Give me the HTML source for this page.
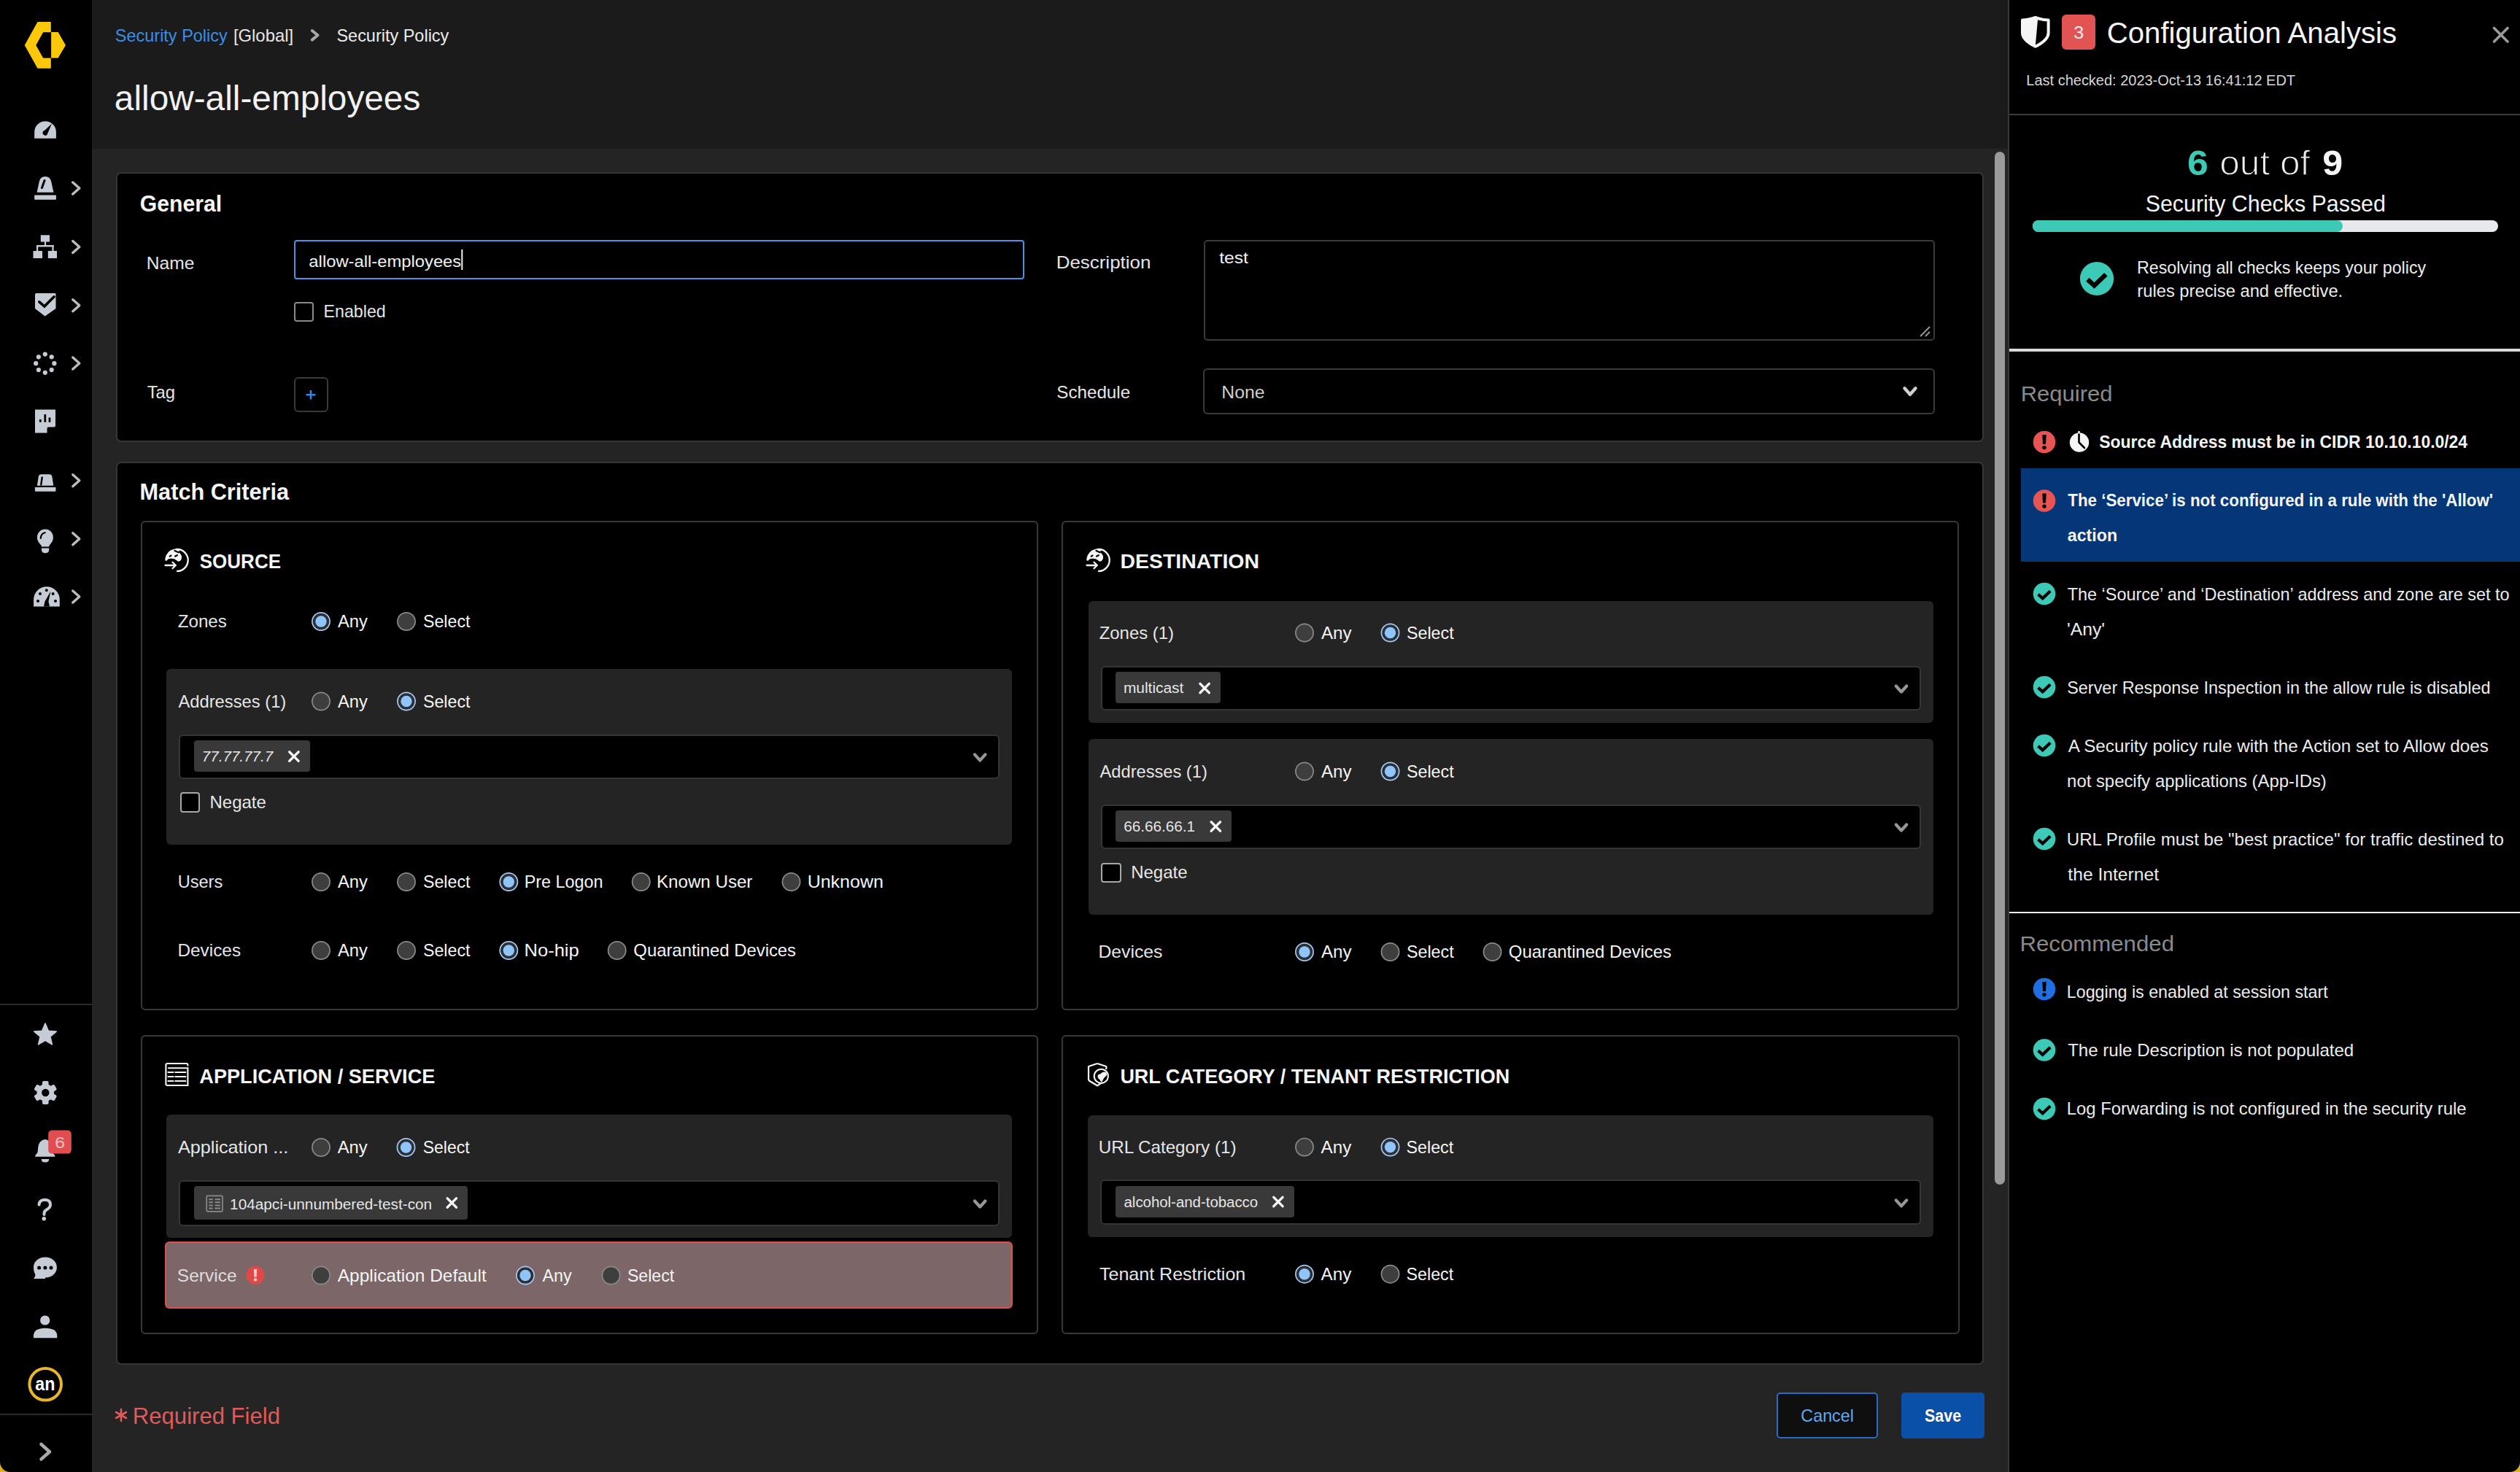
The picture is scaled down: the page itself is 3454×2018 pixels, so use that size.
<!DOCTYPE html>
<html><head><meta charset="utf-8"><style>
html,body{margin:0;padding:0;}
body{width:3454px;height:2018px;background:#242424;position:relative;overflow:hidden;font-family:"Liberation Sans",sans-serif;}
#bg>div{position:absolute;box-sizing:border-box;}
svg{position:absolute;left:0;top:0;}
text{font-family:"Liberation Sans",sans-serif;}
</style></head><body>
<div id="bg">
<div style="left:0px;top:0px;width:126px;height:2018px;background:#000;"></div>
<div style="left:0px;top:1376px;width:126px;height:2px;background:#2a2a2a;"></div>
<div style="left:0px;top:1938px;width:126px;height:2px;background:#2a2a2a;"></div>
<div style="left:126px;top:0px;width:2626px;height:204px;background:#1b1b1b;"></div>
<div style="left:2752px;top:0px;width:702px;height:2018px;background:#000;"></div>
<div style="left:2752px;top:0px;width:2px;height:2018px;background:#383838;"></div>
<div style="left:2734px;top:208px;width:14px;height:1416px;background:#9a9a9a;border-radius:7px;"></div>
<div style="left:158.5px;top:235.5px;width:2560.0px;height:370.0px;background:#000;border:2px solid #363636;border-radius:7px;"></div>
<div style="left:158.5px;top:632.5px;width:2560.0px;height:1238.0px;background:#000;border:2px solid #363636;border-radius:7px;"></div>
<div style="left:192.5px;top:714px;width:1230.0px;height:670.5px;background:#000;border:2px solid #383838;border-radius:6px;"></div>
<div style="left:1455px;top:714px;width:1230px;height:671px;background:#000;border:2px solid #383838;border-radius:6px;"></div>
<div style="left:192.5px;top:1419px;width:1230.0px;height:410px;background:#000;border:2px solid #383838;border-radius:6px;"></div>
<div style="left:1455px;top:1419px;width:1230.5px;height:410px;background:#000;border:2px solid #383838;border-radius:6px;"></div>
<div style="left:228px;top:917px;width:1158.5px;height:240.5px;background:#242424;border-radius:6px;"></div>
<div style="left:1491.5px;top:823.5px;width:1158.5px;height:167.5px;background:#242424;border-radius:6px;"></div>
<div style="left:1491.5px;top:1013px;width:1158.5px;height:240.5px;background:#242424;border-radius:6px;"></div>
<div style="left:228px;top:1528px;width:1158.5px;height:169px;background:#242424;border-radius:6px;"></div>
<div style="left:1491px;top:1528.5px;width:1158.5px;height:167.0px;background:#242424;border-radius:6px;"></div>
<div style="left:226px;top:1702px;width:1162px;height:92px;background:#7c6667;border:2px solid #e04f50;border-radius:6px;"></div>
<div style="left:245px;top:1006.5px;width:1124.5px;height:61.0px;background:#000;border:2px solid #353535;border-radius:6px;"></div>
<div style="left:1508.5px;top:912.5px;width:1124.0px;height:61.0px;background:#000;border:2px solid #353535;border-radius:6px;"></div>
<div style="left:1508.5px;top:1102.5px;width:1124.0px;height:61.0px;background:#000;border:2px solid #353535;border-radius:6px;"></div>
<div style="left:244.5px;top:1617.5px;width:1125.0px;height:63.0px;background:#000;border:2px solid #353535;border-radius:6px;"></div>
<div style="left:1507.5px;top:1617px;width:1125.5px;height:62px;background:#000;border:2px solid #353535;border-radius:6px;"></div>
<div style="left:266px;top:1015px;width:159px;height:42.5px;background:#393939;border-radius:4px;"></div>
<div style="left:1529px;top:921px;width:144px;height:42.5px;background:#393939;border-radius:4px;"></div>
<div style="left:1529px;top:1111px;width:159px;height:42.5px;background:#393939;border-radius:4px;"></div>
<div style="left:266px;top:1626px;width:375px;height:46px;background:#393939;border-radius:4px;"></div>
<div style="left:1529px;top:1626px;width:245px;height:43px;background:#393939;border-radius:4px;"></div>
<div style="left:402.5px;top:329px;width:1001.5px;height:54px;background:#000;border:2px solid #4a92e6;border-radius:4px;"></div>
<div style="left:1649.5px;top:328.5px;width:1002.0px;height:138.0px;background:#000;border:2px solid #3a3a3a;border-radius:5px;"></div>
<div style="left:1649px;top:505px;width:1002.5px;height:63px;background:#000;border:2px solid #3a3a3a;border-radius:6px;"></div>
<div style="left:402.5px;top:413.5px;width:27.0px;height:27.0px;background:#000;border:2px solid #8a8a8a;border-radius:4px;"></div>
<div style="left:402.5px;top:517px;width:47.5px;height:47.5px;background:#000;border:2px solid #3a3a3a;border-radius:6px;"></div>
<div style="left:246.5px;top:1086px;width:27.0px;height:27.5px;background:#000;border:2px solid #a8a8a8;border-radius:4px;"></div>
<div style="left:1509px;top:1182.5px;width:27.5px;height:27.5px;background:#000;border:2px solid #a8a8a8;border-radius:4px;"></div>
<div style="left:2435px;top:1908.5px;width:139px;height:63.0px;background:#0f0f10;border:2px solid #2a6ac5;border-radius:5px;"></div>
<div style="left:2606px;top:1908.5px;width:114px;height:63.0px;background:#0b50a8;border-radius:5px;"></div>
<div style="left:2754px;top:156px;width:700px;height:2px;background:#3a3a3a;"></div>
<div style="left:2786px;top:302px;width:637.5px;height:16px;background:#e8e9ec;border-radius:8px;"></div>
<div style="left:2786px;top:302px;width:424.5px;height:16px;background:#3cc9b6;border-radius:8px;"></div>
<div style="left:2754px;top:478px;width:700px;height:4px;background:#d9d9d9;"></div>
<div style="left:2770px;top:642px;width:684px;height:128px;background:#043678;"></div>
<div style="left:2754px;top:1250px;width:700px;height:2px;background:#eeeeee;"></div>
<div style="left:2826px;top:20px;width:46px;height:48px;background:#e25353;border-radius:6px;"></div>
</div>
<svg width="3454" height="2018" viewBox="0 0 3454 2018">
<text x="157.83" y="57.30" font-size="24.00" fill="#3a8ee6" textLength="153.91" lengthAdjust="spacingAndGlyphs">Security Policy</text>
<text x="319.90" y="57.30" font-size="24.00" fill="#e6e6e6" textLength="82.20" lengthAdjust="spacingAndGlyphs">[Global]</text>
<text x="461.43" y="57.30" font-size="24.00" fill="#ececec" textLength="153.91" lengthAdjust="spacingAndGlyphs">Security Policy</text>
<text x="156.87" y="151.30" font-size="48.00" fill="#f2f2f2" textLength="419.46" lengthAdjust="spacingAndGlyphs">allow-all-employees</text>
<text x="191.76" y="289.70" font-size="32.00" fill="#f5f5f5" font-weight="bold" textLength="112.37" lengthAdjust="spacingAndGlyphs">General</text>
<text x="200.78" y="368.70" font-size="24.00" fill="#e6e6e6" textLength="65.61" lengthAdjust="spacingAndGlyphs">Name</text>
<text x="423.39" y="366.00" font-size="22.00" fill="#f0f0f0" textLength="208.87" lengthAdjust="spacingAndGlyphs">allow-all-employees</text>
<text x="443.60" y="434.50" font-size="24.00" fill="#e6e6e6" textLength="85.10" lengthAdjust="spacingAndGlyphs">Enabled</text>
<text x="201.70" y="545.90" font-size="24.00" fill="#e6e6e6" textLength="38.44" lengthAdjust="spacingAndGlyphs">Tag</text>
<text x="1447.67" y="367.70" font-size="24.00" fill="#e6e6e6" textLength="129.71" lengthAdjust="spacingAndGlyphs">Description</text>
<text x="1671.23" y="361.10" font-size="22.00" fill="#f0f0f0" textLength="39.75" lengthAdjust="spacingAndGlyphs">test</text>
<text x="1448.30" y="545.70" font-size="24.00" fill="#e6e6e6" textLength="100.77" lengthAdjust="spacingAndGlyphs">Schedule</text>
<text x="1674.27" y="545.70" font-size="24.00" fill="#cfcfcf" textLength="59.13" lengthAdjust="spacingAndGlyphs">None</text>
<text x="191.55" y="685.00" font-size="32.00" fill="#f5f5f5" font-weight="bold" textLength="204.56" lengthAdjust="spacingAndGlyphs">Match Criteria</text>
<text x="273.75" y="778.70" font-size="28.00" fill="#f5f5f5" font-weight="bold" textLength="111.27" lengthAdjust="spacingAndGlyphs">SOURCE</text>
<text x="243.73" y="860.00" font-size="24.00" fill="#e6e6e6" textLength="67.14" lengthAdjust="spacingAndGlyphs">Zones</text>
<text x="462.95" y="860.00" font-size="24.00" fill="#f5f5f5" textLength="40.89" lengthAdjust="spacingAndGlyphs">Any</text>
<text x="579.95" y="860.00" font-size="24.00" fill="#f5f5f5" textLength="64.52" lengthAdjust="spacingAndGlyphs">Select</text>
<text x="244.45" y="969.50" font-size="24.00" fill="#e6e6e6" textLength="147.82" lengthAdjust="spacingAndGlyphs">Addresses (1)</text>
<text x="462.95" y="969.50" font-size="24.00" fill="#f5f5f5" textLength="40.89" lengthAdjust="spacingAndGlyphs">Any</text>
<text x="579.95" y="969.50" font-size="24.00" fill="#f5f5f5" textLength="64.52" lengthAdjust="spacingAndGlyphs">Select</text>
<text x="276.87" y="1044.00" font-size="20.00" fill="#e6e6e6" font-style="italic" textLength="97.30" lengthAdjust="spacingAndGlyphs">77.77.77.7</text>
<text x="287.53" y="1108.00" font-size="24.00" fill="#e6e6e6" textLength="77.33" lengthAdjust="spacingAndGlyphs">Negate</text>
<text x="243.68" y="1216.70" font-size="24.00" fill="#e6e6e6" textLength="61.57" lengthAdjust="spacingAndGlyphs">Users</text>
<text x="462.95" y="1217.00" font-size="24.00" fill="#f5f5f5" textLength="40.89" lengthAdjust="spacingAndGlyphs">Any</text>
<text x="579.95" y="1217.00" font-size="24.00" fill="#f5f5f5" textLength="64.52" lengthAdjust="spacingAndGlyphs">Select</text>
<text x="718.79" y="1217.00" font-size="24.00" fill="#f5f5f5" textLength="107.63" lengthAdjust="spacingAndGlyphs">Pre Logon</text>
<text x="900.02" y="1217.00" font-size="24.00" fill="#f5f5f5" textLength="131.38" lengthAdjust="spacingAndGlyphs">Known User</text>
<text x="1106.67" y="1217.00" font-size="24.00" fill="#f5f5f5" textLength="104.25" lengthAdjust="spacingAndGlyphs">Unknown</text>
<text x="243.50" y="1311.00" font-size="24.00" fill="#e6e6e6" textLength="86.58" lengthAdjust="spacingAndGlyphs">Devices</text>
<text x="462.95" y="1311.00" font-size="24.00" fill="#f5f5f5" textLength="40.89" lengthAdjust="spacingAndGlyphs">Any</text>
<text x="579.95" y="1311.00" font-size="24.00" fill="#f5f5f5" textLength="64.52" lengthAdjust="spacingAndGlyphs">Select</text>
<text x="718.61" y="1311.00" font-size="24.00" fill="#f5f5f5" textLength="75.06" lengthAdjust="spacingAndGlyphs">No-hip</text>
<text x="868.37" y="1311.00" font-size="24.00" fill="#f5f5f5" textLength="222.69" lengthAdjust="spacingAndGlyphs">Quarantined Devices</text>
<text x="1535.62" y="778.70" font-size="28.00" fill="#f5f5f5" font-weight="bold" textLength="190.27" lengthAdjust="spacingAndGlyphs">DESTINATION</text>
<text x="1506.74" y="875.50" font-size="24.00" fill="#e6e6e6" textLength="102.24" lengthAdjust="spacingAndGlyphs">Zones (1)</text>
<text x="1810.95" y="875.50" font-size="24.00" fill="#f5f5f5" textLength="41.59" lengthAdjust="spacingAndGlyphs">Any</text>
<text x="1927.94" y="875.50" font-size="24.00" fill="#f5f5f5" textLength="64.73" lengthAdjust="spacingAndGlyphs">Select</text>
<text x="1539.91" y="950.00" font-size="20.00" fill="#e6e6e6" textLength="82.44" lengthAdjust="spacingAndGlyphs">multicast</text>
<text x="1507.55" y="1066.00" font-size="24.00" fill="#e6e6e6" textLength="147.21" lengthAdjust="spacingAndGlyphs">Addresses (1)</text>
<text x="1810.95" y="1066.00" font-size="24.00" fill="#f5f5f5" textLength="41.59" lengthAdjust="spacingAndGlyphs">Any</text>
<text x="1927.94" y="1066.00" font-size="24.00" fill="#f5f5f5" textLength="64.73" lengthAdjust="spacingAndGlyphs">Select</text>
<text x="1540.25" y="1139.80" font-size="20.00" fill="#e6e6e6" textLength="97.76" lengthAdjust="spacingAndGlyphs">66.66.66.1</text>
<text x="1550.23" y="1203.50" font-size="24.00" fill="#e6e6e6" textLength="77.33" lengthAdjust="spacingAndGlyphs">Negate</text>
<text x="1505.47" y="1313.00" font-size="24.00" fill="#e6e6e6" textLength="87.92" lengthAdjust="spacingAndGlyphs">Devices</text>
<text x="1810.95" y="1313.00" font-size="24.00" fill="#f5f5f5" textLength="41.59" lengthAdjust="spacingAndGlyphs">Any</text>
<text x="1927.94" y="1313.00" font-size="24.00" fill="#f5f5f5" textLength="64.73" lengthAdjust="spacingAndGlyphs">Select</text>
<text x="2067.87" y="1313.00" font-size="24.00" fill="#f5f5f5" textLength="222.99" lengthAdjust="spacingAndGlyphs">Quarantined Devices</text>
<text x="273.33" y="1484.80" font-size="28.00" fill="#f5f5f5" font-weight="bold" textLength="323.02" lengthAdjust="spacingAndGlyphs">APPLICATION / SERVICE</text>
<text x="243.95" y="1581.00" font-size="24.00" fill="#e6e6e6" textLength="151.35" lengthAdjust="spacingAndGlyphs">Application ...</text>
<text x="462.75" y="1581.00" font-size="24.00" fill="#f5f5f5" textLength="40.89" lengthAdjust="spacingAndGlyphs">Any</text>
<text x="579.66" y="1581.00" font-size="24.00" fill="#f5f5f5" textLength="63.91" lengthAdjust="spacingAndGlyphs">Select</text>
<text x="315.12" y="1657.60" font-size="20.00" fill="#e6e6e6" textLength="277.03" lengthAdjust="spacingAndGlyphs">104apci-unnumbered-test-con</text>
<text x="242.89" y="1757.00" font-size="24.00" fill="#e0dcdc" textLength="81.70" lengthAdjust="spacingAndGlyphs">Service</text>
<text x="462.75" y="1757.00" font-size="24.00" fill="#f5f5f5" textLength="203.93" lengthAdjust="spacingAndGlyphs">Application Default</text>
<text x="743.45" y="1757.00" font-size="24.00" fill="#f5f5f5" textLength="40.09" lengthAdjust="spacingAndGlyphs">Any</text>
<text x="859.95" y="1757.00" font-size="24.00" fill="#f5f5f5" textLength="64.22" lengthAdjust="spacingAndGlyphs">Select</text>
<text x="1535.39" y="1484.70" font-size="28.00" fill="#f5f5f5" font-weight="bold" textLength="533.91" lengthAdjust="spacingAndGlyphs">URL CATEGORY / TENANT RESTRICTION</text>
<text x="1505.74" y="1580.60" font-size="24.00" fill="#e6e6e6" textLength="188.75" lengthAdjust="spacingAndGlyphs">URL Category (1)</text>
<text x="1810.55" y="1580.60" font-size="24.00" fill="#f5f5f5" textLength="41.69" lengthAdjust="spacingAndGlyphs">Any</text>
<text x="1927.54" y="1580.60" font-size="24.00" fill="#f5f5f5" textLength="64.63" lengthAdjust="spacingAndGlyphs">Select</text>
<text x="1540.53" y="1655.00" font-size="20.00" fill="#e6e6e6" textLength="183.62" lengthAdjust="spacingAndGlyphs">alcohol-and-tobacco</text>
<text x="1507.05" y="1754.70" font-size="24.00" fill="#e6e6e6" textLength="200.16" lengthAdjust="spacingAndGlyphs">Tenant Restriction</text>
<text x="1810.55" y="1754.70" font-size="24.00" fill="#f5f5f5" textLength="41.69" lengthAdjust="spacingAndGlyphs">Any</text>
<text x="1927.54" y="1754.70" font-size="24.00" fill="#f5f5f5" textLength="64.63" lengthAdjust="spacingAndGlyphs">Select</text>
<path d="M166.00,1932.00 L166.00,1948.00 M159.07,1936.00 L172.93,1944.00 M172.93,1936.00 L159.07,1944.00" stroke="#e05a5a" stroke-width="2.6" stroke-linecap="round"/>
<text x="181.85" y="1952.10" font-size="32.00" fill="#e05a5a" textLength="202.15" lengthAdjust="spacingAndGlyphs">Required Field</text>
<text x="2468.31" y="1949.00" font-size="24.00" fill="#5fa8f5" textLength="72.65" lengthAdjust="spacingAndGlyphs">Cancel</text>
<text x="2638.08" y="1949.00" font-size="24.00" fill="#ffffff" font-weight="bold" textLength="49.95" lengthAdjust="spacingAndGlyphs">Save</text>
<text x="2887.77" y="58.80" font-size="40.00" fill="#f5f5f5" textLength="397.27" lengthAdjust="spacingAndGlyphs">Configuration Analysis</text>
<text x="2842.34" y="52.90" font-size="24.00" fill="#fff0f0" textLength="13.96" lengthAdjust="spacingAndGlyphs">3</text>
<text x="2777.36" y="116.80" font-size="20.00" fill="#d6d6d6" textLength="368.70" lengthAdjust="spacingAndGlyphs">Last checked: 2023-Oct-13 16:41:12 EDT</text>
<text x="2998.11" y="239.70" font-size="48.00" fill="#3cc9b6" font-weight="bold" textLength="28.76" lengthAdjust="spacingAndGlyphs">6</text>
<text x="3042.22" y="239.70" font-size="48.00" fill="#ececec" stroke="#000" stroke-width="1.3" textLength="124.11" lengthAdjust="spacingAndGlyphs">out of</text>
<text x="3183.26" y="239.70" font-size="48.00" fill="#f5f5f5" font-weight="bold" textLength="27.90" lengthAdjust="spacingAndGlyphs">9</text>
<text x="2940.72" y="290.00" font-size="32.00" fill="#f5f5f5" textLength="329.14" lengthAdjust="spacingAndGlyphs">Security Checks Passed</text>
<text x="2929.00" y="374.70" font-size="24.00" fill="#ececec" textLength="396.15" lengthAdjust="spacingAndGlyphs">Resolving all checks keeps your policy</text>
<text x="2929.33" y="406.90" font-size="24.00" fill="#ececec" textLength="281.84" lengthAdjust="spacingAndGlyphs">rules precise and effective.</text>
<text x="2769.76" y="550.00" font-size="30.00" fill="#8a8a8a" textLength="125.74" lengthAdjust="spacingAndGlyphs">Required</text>
<text x="2877.34" y="614.00" font-size="24.00" fill="#f5f5f5" font-weight="bold" textLength="504.78" lengthAdjust="spacingAndGlyphs">Source Address must be in CIDR 10.10.10.0/24</text>
<text x="2834.25" y="694.30" font-size="24.00" fill="#f5f5f5" font-weight="bold" textLength="582.90" lengthAdjust="spacingAndGlyphs">The ‘Service’ is not configured in a rule with the 'Allow'</text>
<text x="2833.82" y="742.20" font-size="24.00" fill="#f5f5f5" font-weight="bold" textLength="68.32" lengthAdjust="spacingAndGlyphs">action</text>
<text x="2833.78" y="822.80" font-size="24.00" fill="#ececec" textLength="605.70" lengthAdjust="spacingAndGlyphs">The ‘Source’ and ‘Destination’ address and zone are set to</text>
<text x="2833.05" y="870.50" font-size="24.00" fill="#ececec" textLength="51.89" lengthAdjust="spacingAndGlyphs">'Any'</text>
<text x="2833.24" y="951.00" font-size="24.00" fill="#ececec" textLength="580.27" lengthAdjust="spacingAndGlyphs">Server Response Inspection in the allow rule is disabled</text>
<text x="2834.65" y="1031.20" font-size="24.00" fill="#ececec" textLength="576.12" lengthAdjust="spacingAndGlyphs">A Security policy rule with the Action set to Allow does</text>
<text x="2833.11" y="1078.50" font-size="24.00" fill="#ececec" textLength="355.67" lengthAdjust="spacingAndGlyphs">not specify applications (App-IDs)</text>
<text x="2832.85" y="1158.50" font-size="24.00" fill="#ececec" textLength="598.96" lengthAdjust="spacingAndGlyphs">URL Profile must be "best practice" for traffic destined to</text>
<text x="2834.33" y="1206.50" font-size="24.00" fill="#ececec" textLength="124.65" lengthAdjust="spacingAndGlyphs">the Internet</text>
<text x="2768.44" y="1303.80" font-size="30.00" fill="#8a8a8a" textLength="211.57" lengthAdjust="spacingAndGlyphs">Recommended</text>
<text x="2832.79" y="1368.00" font-size="24.00" fill="#ececec" textLength="357.88" lengthAdjust="spacingAndGlyphs">Logging is enabled at session start</text>
<text x="2834.16" y="1448.00" font-size="24.00" fill="#ececec" textLength="392.09" lengthAdjust="spacingAndGlyphs">The rule Description is not populated</text>
<text x="2832.74" y="1527.60" font-size="24.00" fill="#ececec" textLength="547.82" lengthAdjust="spacingAndGlyphs">Log Forwarding is not configured in the security rule</text>
<text x="48.32" y="1906.40" font-size="26.00" fill="#ffffff" font-weight="bold" textLength="27.12" lengthAdjust="spacingAndGlyphs">an</text>
<circle cx="440" cy="852" r="12.1" fill="#2c2f33" stroke="#a7c9f3" stroke-width="1.7"/><circle cx="440" cy="852" r="7.7" fill="#90c5fb"/>
<circle cx="557" cy="852" r="12.1" fill="#3e3e3e" stroke="#8a8a8a" stroke-width="1.7"/>
<circle cx="440" cy="961.5" r="12.1" fill="#3e3e3e" stroke="#8a8a8a" stroke-width="1.7"/>
<circle cx="557" cy="961.5" r="12.1" fill="#2c2f33" stroke="#a7c9f3" stroke-width="1.7"/><circle cx="557" cy="961.5" r="7.7" fill="#90c5fb"/>
<circle cx="440" cy="1209" r="12.1" fill="#3e3e3e" stroke="#8a8a8a" stroke-width="1.7"/>
<circle cx="557" cy="1209" r="12.1" fill="#3e3e3e" stroke="#8a8a8a" stroke-width="1.7"/>
<circle cx="697.3" cy="1209" r="12.1" fill="#2c2f33" stroke="#a7c9f3" stroke-width="1.7"/><circle cx="697.3" cy="1209" r="7.7" fill="#90c5fb"/>
<circle cx="878.7" cy="1209" r="12.1" fill="#3e3e3e" stroke="#8a8a8a" stroke-width="1.7"/>
<circle cx="1084.5" cy="1209" r="12.1" fill="#3e3e3e" stroke="#8a8a8a" stroke-width="1.7"/>
<circle cx="440" cy="1303" r="12.1" fill="#3e3e3e" stroke="#8a8a8a" stroke-width="1.7"/>
<circle cx="557" cy="1303" r="12.1" fill="#3e3e3e" stroke="#8a8a8a" stroke-width="1.7"/>
<circle cx="697.3" cy="1303" r="12.1" fill="#2c2f33" stroke="#a7c9f3" stroke-width="1.7"/><circle cx="697.3" cy="1303" r="7.7" fill="#90c5fb"/>
<circle cx="845.7" cy="1303" r="12.1" fill="#3e3e3e" stroke="#8a8a8a" stroke-width="1.7"/>
<circle cx="1788" cy="867.5" r="12.1" fill="#3e3e3e" stroke="#8a8a8a" stroke-width="1.7"/>
<circle cx="1905.5" cy="867.5" r="12.1" fill="#2c2f33" stroke="#a7c9f3" stroke-width="1.7"/><circle cx="1905.5" cy="867.5" r="7.7" fill="#90c5fb"/>
<circle cx="1788" cy="1057.5" r="12.1" fill="#3e3e3e" stroke="#8a8a8a" stroke-width="1.7"/>
<circle cx="1905.5" cy="1057.5" r="12.1" fill="#2c2f33" stroke="#a7c9f3" stroke-width="1.7"/><circle cx="1905.5" cy="1057.5" r="7.7" fill="#90c5fb"/>
<circle cx="1788" cy="1305" r="12.1" fill="#2c2f33" stroke="#a7c9f3" stroke-width="1.7"/><circle cx="1788" cy="1305" r="7.7" fill="#90c5fb"/>
<circle cx="1905.5" cy="1305" r="12.1" fill="#3e3e3e" stroke="#8a8a8a" stroke-width="1.7"/>
<circle cx="2045.5" cy="1305" r="12.1" fill="#3e3e3e" stroke="#8a8a8a" stroke-width="1.7"/>
<circle cx="440" cy="1573" r="12.1" fill="#3e3e3e" stroke="#8a8a8a" stroke-width="1.7"/>
<circle cx="556.5" cy="1573" r="12.1" fill="#2c2f33" stroke="#a7c9f3" stroke-width="1.7"/><circle cx="556.5" cy="1573" r="7.7" fill="#90c5fb"/>
<circle cx="440" cy="1748.5" r="12.1" fill="#3e3e3e" stroke="#8a8a8a" stroke-width="1.7"/>
<circle cx="720" cy="1748.5" r="12.1" fill="#2c2f33" stroke="#a7c9f3" stroke-width="1.7"/><circle cx="720" cy="1748.5" r="7.7" fill="#90c5fb"/>
<circle cx="837.5" cy="1748.5" r="12.1" fill="#3e3e3e" stroke="#8a8a8a" stroke-width="1.7"/>
<circle cx="1788" cy="1572.6" r="12.1" fill="#3e3e3e" stroke="#8a8a8a" stroke-width="1.7"/>
<circle cx="1905.5" cy="1572.6" r="12.1" fill="#2c2f33" stroke="#a7c9f3" stroke-width="1.7"/><circle cx="1905.5" cy="1572.6" r="7.7" fill="#90c5fb"/>
<circle cx="1788" cy="1746.7" r="12.1" fill="#2c2f33" stroke="#a7c9f3" stroke-width="1.7"/><circle cx="1788" cy="1746.7" r="7.7" fill="#90c5fb"/>
<circle cx="1905.5" cy="1746.7" r="12.1" fill="#3e3e3e" stroke="#8a8a8a" stroke-width="1.7"/>
<polyline points="1335.95,1034.4 1343.2,1042.4 1350.45,1034.4" fill="none" stroke="#979797" stroke-width="4.2" stroke-linecap="round" stroke-linejoin="round"/>
<polyline points="2598.75,940.5 2606,948.5 2613.25,940.5" fill="none" stroke="#979797" stroke-width="4.2" stroke-linecap="round" stroke-linejoin="round"/>
<polyline points="2598.75,1130.5 2606,1138.5 2613.25,1130.5" fill="none" stroke="#979797" stroke-width="4.2" stroke-linecap="round" stroke-linejoin="round"/>
<polyline points="1335.95,1646.5 1343.2,1654.5 1350.45,1646.5" fill="none" stroke="#979797" stroke-width="4.2" stroke-linecap="round" stroke-linejoin="round"/>
<polyline points="2598.75,1645.4 2606,1653.4 2613.25,1645.4" fill="none" stroke="#979797" stroke-width="4.2" stroke-linecap="round" stroke-linejoin="round"/>
<polyline points="2610.5,532.25 2618,540.75 2625.5,532.25" fill="none" stroke="#d0d0d0" stroke-width="4.4" stroke-linecap="round" stroke-linejoin="round"/>
<path d="M396.65,1030.75 L409.15,1043.25 M409.15,1030.75 L396.65,1043.25" stroke="#f5f5f5" stroke-width="3.2" stroke-linecap="round"/>
<path d="M1644.85,937.25 L1657.35,949.75 M1657.35,937.25 L1644.85,949.75" stroke="#f5f5f5" stroke-width="3.2" stroke-linecap="round"/>
<path d="M1660.05,1126.75 L1672.55,1139.25 M1672.55,1126.75 L1660.05,1139.25" stroke="#f5f5f5" stroke-width="3.2" stroke-linecap="round"/>
<path d="M613.05,1642.75 L625.55,1655.25 M625.55,1642.75 L613.05,1655.25" stroke="#f5f5f5" stroke-width="3.2" stroke-linecap="round"/>
<path d="M1745.65,1641.25 L1758.15,1653.75 M1758.15,1641.25 L1745.65,1653.75" stroke="#f5f5f5" stroke-width="3.2" stroke-linecap="round"/>
<g fill="none" stroke="#8a8a8a" stroke-width="1.7"><rect x="283.2" y="1639.3" width="21.8" height="21.5" rx="1.5"/><path d="M286.3,1644.2 H291.8 M294.5,1644.2 H302 M286.3,1648.3 H291.8 M294.5,1648.3 H302 M286.3,1652.4 H291.8 M294.5,1652.4 H302 M286.3,1656.5 H291.8 M294.5,1656.5 H302" stroke-width="2"/></g>
<g fill="#fcc80a"><polygon points="51.5,30.1 69.8,30.1 69.8,44.2 59.1,44.2 49.3,61.9 59.1,79.6 69.8,79.6 69.8,93.7 51.5,93.7 33.75,61.9"/><polygon points="70.1,44.1 79.6,44.1 90,61.9 79.6,79.6 70.1,79.6"/></g>
<polyline points="427.8,42 435.5,48.3 427.8,54.6" fill="none" stroke="#a8a8a8" stroke-width="4" stroke-linecap="round" stroke-linejoin="round"/>
<g fill="#c5ccd6"><path d="M47.2,189.8 V181 A14.85,14.85 0 0 1 76.9,181 V189.8 Z"/><path d="M50.6,263.7 L53.8,249 Q55.3,242 62,242 Q68.7,242 70.2,249 L73.5,263.7 Z"/><rect x="47.2" y="267.5" width="29.7" height="6.3" rx="0.8"/><rect x="55.8" y="322.3" width="12.2" height="9.2"/><rect x="60.9" y="331" width="2.2" height="6"/><rect x="50" y="336" width="23.6" height="2.4"/><rect x="50" y="336" width="2.2" height="8.5"/><rect x="71.4" y="336" width="2.2" height="8.5"/><rect x="45.5" y="344" width="12.5" height="10"/><rect x="65.8" y="344" width="12.2" height="10"/><path d="M48,403.5 Q48,402 49.5,402 H75 Q76.5,402 76.5,403.5 V423 L61.6,433.4 L48,423 Z"/><path d="M48,561.4 H76 V583.5 Q76,585.5 74,585.5 H66.5 Q64.5,585.5 64.5,587.5 V593.5 H48 Z"/><path d="M50.9,665.8 L52.8,653.5 Q53.4,650.2 56.6,650.2 H67.6 Q70.8,650.2 71.4,653.5 L73.3,665.8 Z"/><rect x="47.9" y="667.9" width="28.5" height="5.8" rx="0.6"/><path d="M61.9,725.6 A11,11 0 0 1 72.9,736.6 Q72.9,741.5 69.8,745 Q67.2,747.8 67.2,749.5 H57 Q57,747.8 54.2,745 Q50.9,741.5 50.9,736.6 A11,11 0 0 1 61.9,725.6 Z"/><path d="M57,751.4 H67.2 V753.5 Q67.2,758.2 62.1,758.2 Q57,758.2 57,753.5 Z"/><path d="M46.1,831.6 V822 A17.85,17.85 0 0 1 81.8,822 V831.6 Z"/></g>
<g fill="#c5ccd6"><circle cx="74.40" cy="498.20" r="3.1"/><circle cx="70.71" cy="507.11" r="3.1"/><circle cx="61.80" cy="510.80" r="3.1"/><circle cx="52.89" cy="507.11" r="3.1"/><circle cx="49.20" cy="498.20" r="3.1"/><circle cx="52.89" cy="489.29" r="3.1"/><circle cx="61.80" cy="485.60" r="3.1"/><circle cx="70.71" cy="489.29" r="3.1"/></g>
<g stroke="#000" fill="none" stroke-linecap="round"><path d="M57.5,257.5 L61,247.5" stroke-width="3"/><path d="M53.9,413.8 L60.9,420 L74.1,406.8" stroke-width="3.6"/><path d="M55.3,575 V578.8 M61.8,568 V578.8 M68,572.5 V578.8" stroke-width="2.8" stroke-linecap="butt"/><path d="M56.3,664.5 L57.7,654.5" stroke-width="2.4"/><path d="M55.8,738 Q56,731.5 61.7,730.2" stroke-width="2.2"/></g>
<g fill="#000"><path d="M58.5,183.5 Q58,179.5 61.5,178.5 L71,169.5 L64.5,184.8 Q62,187.5 58.5,183.5 Z"/><circle cx="55" cy="814" r="2"/><circle cx="63.8" cy="809.2" r="2"/><circle cx="72.6" cy="814" r="2"/><circle cx="52" cy="824" r="2"/><circle cx="76" cy="824" r="2"/><path d="M60,831.6 L61.5,824.5 L69.5,810.5 L66.5,824.5 L68,831.6 Z"/></g>
<polyline points="99.8,250 108.8,258 99.8,266" fill="none" stroke="#bdbdbd" stroke-width="3.4" stroke-linecap="round" stroke-linejoin="round"/>
<polyline points="99.8,330.5 108.8,338.5 99.8,346.5" fill="none" stroke="#bdbdbd" stroke-width="3.4" stroke-linecap="round" stroke-linejoin="round"/>
<polyline points="99.8,410.7 108.8,418.7 99.8,426.7" fill="none" stroke="#bdbdbd" stroke-width="3.4" stroke-linecap="round" stroke-linejoin="round"/>
<polyline points="99.8,490 108.8,498 99.8,506" fill="none" stroke="#bdbdbd" stroke-width="3.4" stroke-linecap="round" stroke-linejoin="round"/>
<polyline points="99.8,650.7 108.8,658.7 99.8,666.7" fill="none" stroke="#bdbdbd" stroke-width="3.4" stroke-linecap="round" stroke-linejoin="round"/>
<polyline points="99.8,730.7 108.8,738.7 99.8,746.7" fill="none" stroke="#bdbdbd" stroke-width="3.4" stroke-linecap="round" stroke-linejoin="round"/>
<polyline points="99.8,810 108.8,818 99.8,826" fill="none" stroke="#bdbdbd" stroke-width="3.4" stroke-linecap="round" stroke-linejoin="round"/>
<polygon points="62.00,1403.00 66.23,1413.18 77.22,1414.06 68.85,1421.22 71.40,1431.94 62.00,1426.20 52.60,1431.94 55.15,1421.22 46.78,1414.06 57.77,1413.18" fill="#c5ccd6" stroke="#c5ccd6" stroke-width="1.6" stroke-linejoin="round"/>
<g fill="#c5ccd6"><circle cx="62.3" cy="1498" r="11.8"/><rect x="58.0" y="1482" width="8.6" height="8" rx="2" transform="rotate(0 62.3 1498)"/><rect x="58.0" y="1482" width="8.6" height="8" rx="2" transform="rotate(60 62.3 1498)"/><rect x="58.0" y="1482" width="8.6" height="8" rx="2" transform="rotate(120 62.3 1498)"/><rect x="58.0" y="1482" width="8.6" height="8" rx="2" transform="rotate(180 62.3 1498)"/><rect x="58.0" y="1482" width="8.6" height="8" rx="2" transform="rotate(240 62.3 1498)"/><rect x="58.0" y="1482" width="8.6" height="8" rx="2" transform="rotate(300 62.3 1498)"/></g><circle cx="62.3" cy="1498" r="5.2" fill="#000"/>
<g fill="#c5ccd6"><path d="M48,1585.8 Q48,1583.5 50,1582 Q52,1580 52,1576 Q52,1563.5 61.8,1562 Q71.6,1563.5 71.6,1576 Q71.6,1580 73.6,1582 Q75.5,1583.5 75.5,1585.8 Z"/><path d="M56.7,1589 H67.2 Q67.2,1593.5 62,1593.5 Q56.7,1593.5 56.7,1589 Z"/></g>
<rect x="66.2" y="1549.6" width="31.6" height="32" rx="5" fill="#e24e50"/>
<text x="75.23" y="1574.00" font-size="22.00" fill="#f2c4c4" textLength="13.86" lengthAdjust="spacingAndGlyphs">6</text>
<path d="M53.5,1651.5 Q54,1645 61.5,1644.8 Q69,1645 69,1651.5 Q69,1655.5 64.5,1658 Q60.5,1660 60.5,1663.5 V1665" fill="none" stroke="#c5ccd6" stroke-width="4" stroke-linecap="round"/><circle cx="60.3" cy="1670.7" r="2.8" fill="#c5ccd6"/>
<path d="M62,1723.6 C71,1723.6 77.9,1729.5 77.9,1737.5 C77.9,1745.5 71,1751.5 62,1751.5 L62,1752.9 L46,1752.9 C47.5,1751.5 48.5,1749.5 48.3,1747 C46.8,1744.5 46,1741 46,1737.5 C46,1729.5 53,1723.6 62,1723.6 Z" fill="#c5ccd6"/><g fill="#000"><circle cx="53.6" cy="1737.9" r="2.5"/><circle cx="61.9" cy="1737.9" r="2.5"/><circle cx="70" cy="1737.9" r="2.5"/></g>
<g fill="#c5ccd6"><circle cx="61.7" cy="1810" r="6.6"/><path d="M46,1834.3 V1831 Q46.5,1820.7 62,1820.7 Q77.8,1820.7 78.3,1831 V1834.3 Z"/></g>
<circle cx="62.2" cy="1897.8" r="21.8" fill="none" stroke="#e8b52e" stroke-width="4"/>
<polyline points="56.5,1980 68,1990.2 56.5,2000.4" fill="none" stroke="#ababab" stroke-width="4.5" stroke-linecap="round" stroke-linejoin="round"/>
<g transform="translate(220,745)"><path d="M22.3,7.9 A15,15 0 0 1 23,38" fill="none" stroke="#f5f5f5" stroke-width="2.3" stroke-linecap="round"/><path d="M6.3,23.5 A16,16 0 0 1 28.5,8.3 L24,11.5 Q27.5,13.5 28.8,17 Q29.8,21.5 26.8,24 Q24,25.8 21.8,23 Q19,20.5 14,20.8 Q10,21 8.5,23.8 Z" fill="#f5f5f5"/><path d="M19.5,10 L24.5,12.3 M20.2,17.6 L22.8,16.2 M12.8,17.6 L14.3,16.6" stroke="#000" stroke-width="2.3" stroke-linecap="round"/><path d="M6.5,30 H20.5 M16.5,25.8 L20.8,30 L16.5,34.2" fill="none" stroke="#f5f5f5" stroke-width="2.3" stroke-linecap="round" stroke-linejoin="round"/></g>
<g transform="translate(1483,745)"><path d="M22.3,7.9 A15,15 0 0 1 23,38" fill="none" stroke="#f5f5f5" stroke-width="2.3" stroke-linecap="round"/><path d="M6.3,23.5 A16,16 0 0 1 28.5,8.3 L24,11.5 Q27.5,13.5 28.8,17 Q29.8,21.5 26.8,24 Q24,25.8 21.8,23 Q19,20.5 14,20.8 Q10,21 8.5,23.8 Z" fill="#f5f5f5"/><path d="M19.5,10 L24.5,12.3 M20.2,17.6 L22.8,16.2 M12.8,17.6 L14.3,16.6" stroke="#000" stroke-width="2.3" stroke-linecap="round"/><path d="M6.5,30 H20.5 M16.5,25.8 L20.8,30 L16.5,34.2" fill="none" stroke="#f5f5f5" stroke-width="2.3" stroke-linecap="round" stroke-linejoin="round"/></g>
<g transform="translate(220,1450)" fill="none" stroke="#f5f5f5" stroke-width="2.1"><path d="M37.4,11.5 V10 Q37.4,8 35.4,8 H9.5 Q7.4,8 7.4,10 V36 Q7.4,38 9.5,38 H37.4 V14.2 H10.2"/><path d="M10.5,20 H17.5 M20.3,20 H34.3 M10.5,26 H17.5 M20.3,26 H34.3 M10.5,32 H17.5 M20.3,32 H34.3" stroke-width="2.2" stroke-linecap="round"/></g>
<g transform="translate(1485,1450)"><path d="M19,8 L7,12 V29.5 Q7,31 8.5,32 L19,38.3 L24,35" fill="none" stroke="#f5f5f5" stroke-width="2.2" stroke-linejoin="round"/><path d="M19,8 L31.3,12 V16" fill="none" stroke="#f5f5f5" stroke-width="2.2" stroke-linejoin="round"/><circle cx="24.3" cy="25.3" r="9.6" fill="#000" stroke="#f5f5f5" stroke-width="2.1"/><path d="M19.5,25 Q20,22 23,22.5 L26,20 Q29,19 31.5,20.5 Q33,24 30,26 Q28,27.5 27,30 L25,33.5 Q23,33 22.5,30 Q19.5,28.5 19.5,25 Z" fill="#f5f5f5"/></g>
<path d="M2789.8,24 Q2780,27.5 2772,27.5 V45 Q2772,55 2789.8,63.8 Q2807.6,55 2807.6,45 V27.5 Q2799.5,27.5 2789.8,24 Z" fill="#000" stroke="#f5f5f5" stroke-width="4" stroke-linejoin="round"/><path d="M2789.8,25 Q2780,28.5 2773,28.5 V45 Q2773,54 2789.8,62.5 L2793,27 Z" fill="#f5f5f5"/>
<path d="M3418.5,38.5 L3437,57 M3437,38.5 L3418.5,57" stroke="#9a9a9a" stroke-width="3.6" stroke-linecap="round"/>
<circle cx="2874" cy="382" r="23.1" fill="#3cc9b6"/><polyline points="2861.32,383.06 2870.53,391.51 2886.38,376.26" fill="none" stroke="#000" stroke-width="6.34" stroke-linecap="butt" stroke-linejoin="miter"/>
<circle cx="2802" cy="606" r="15.3" fill="#e65454"/><path d="M2799.30,596.00 H2804.70 L2804.00,609.00 H2800.00 Z" fill="#000"/><circle cx="2802" cy="613.60" r="2.70" fill="#000"/>
<circle cx="2802" cy="686.5" r="15.3" fill="#e65454"/><path d="M2799.30,676.50 H2804.70 L2804.00,689.50 H2800.00 Z" fill="#000"/><circle cx="2802" cy="694.10" r="2.70" fill="#000"/>
<circle cx="2802" cy="814" r="15.3" fill="#3cc9b6"/><polyline points="2793.60,814.70 2799.70,820.30 2810.20,810.20" fill="none" stroke="#000" stroke-width="4.20" stroke-linecap="butt" stroke-linejoin="miter"/>
<circle cx="2802" cy="942" r="15.3" fill="#3cc9b6"/><polyline points="2793.60,942.70 2799.70,948.30 2810.20,938.20" fill="none" stroke="#000" stroke-width="4.20" stroke-linecap="butt" stroke-linejoin="miter"/>
<circle cx="2802" cy="1022" r="15.3" fill="#3cc9b6"/><polyline points="2793.60,1022.70 2799.70,1028.30 2810.20,1018.20" fill="none" stroke="#000" stroke-width="4.20" stroke-linecap="butt" stroke-linejoin="miter"/>
<circle cx="2802" cy="1150" r="15.3" fill="#3cc9b6"/><polyline points="2793.60,1150.70 2799.70,1156.30 2810.20,1146.20" fill="none" stroke="#000" stroke-width="4.20" stroke-linecap="butt" stroke-linejoin="miter"/>
<circle cx="2802" cy="1439.5" r="15.3" fill="#3cc9b6"/><polyline points="2793.60,1440.20 2799.70,1445.80 2810.20,1435.70" fill="none" stroke="#000" stroke-width="4.20" stroke-linecap="butt" stroke-linejoin="miter"/>
<circle cx="2802" cy="1520" r="15.3" fill="#3cc9b6"/><polyline points="2793.60,1520.70 2799.70,1526.30 2810.20,1516.20" fill="none" stroke="#000" stroke-width="4.20" stroke-linecap="butt" stroke-linejoin="miter"/>
<circle cx="2802" cy="1356" r="15.3" fill="#1f6fe0"/><path d="M2799.30,1346.00 H2804.70 L2804.00,1359.00 H2800.00 Z" fill="#000"/><circle cx="2802" cy="1363.60" r="2.70" fill="#000"/>
<circle cx="350" cy="1748.2" r="12.4" fill="#e24848"/><path d="M347.81,1740.10 H352.19 L351.62,1750.63 H348.38 Z" fill="#f4c9c9"/><circle cx="350" cy="1754.36" r="2.19" fill="#f4c9c9"/>
<circle cx="2850" cy="606.5" r="13.2" fill="#f5f5f5"/><path d="M2849.5,594 V606.5 L2857,614" fill="none" stroke="#000" stroke-width="2.6" stroke-linecap="round" stroke-linejoin="round"/><path d="M2849.5,591 V594.5" stroke="#f5f5f5" stroke-width="2.6"/>
<path d="M426,535 V547.5 M419.5,541.2 H432.5" stroke="#2f86ea" stroke-width="2.6"/>
<rect x="632.3" y="342" width="2" height="28" fill="#f0f0f0"/>
<path d="M2632,461 L2645,448 M2639,461 L2645,455" stroke="#9a9a9a" stroke-width="1.8"/>
<path d="M3454,2004 V2018 H3440 A14,14 0 0 0 3454,2004 Z" fill="#e0b020"/>
<path d="M0,2004 V2018 H14 A14,14 0 0 1 0,2004 Z" fill="#e0b020"/>
</svg>
</body></html>
